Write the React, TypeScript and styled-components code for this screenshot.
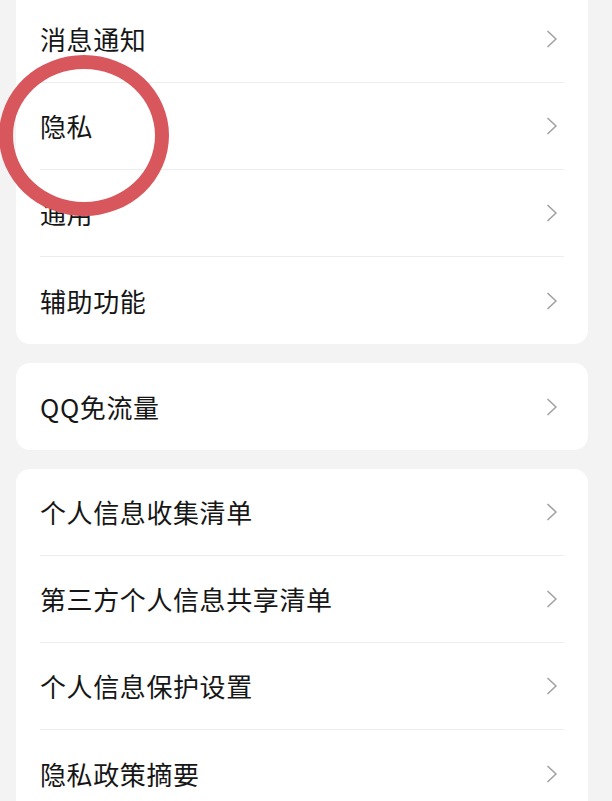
import React from "react";
import styled, { createGlobalStyle } from "styled-components";

const Global = createGlobalStyle`
  html, body { margin: 0; padding: 0; background: #f3f3f3; }
  body { font-family: "Noto Sans CJK SC", "Noto Sans", sans-serif; }
`;

const Page = styled.div`
  position: relative;
  width: 612px;
  height: 801px;
  overflow: hidden;
  background: #f3f3f3;
  padding: 0 24px 0 16px;
  box-sizing: border-box;
  display: flex;
  flex-direction: column;
  gap: 19px;
`;

const Card = styled.div<{ $clipped?: boolean }>`
  background: #ffffff;
  border-radius: ${(p) => (p.$clipped ? "0 0 14px 14px" : "14px")};
  margin-top: ${(p) => (p.$clipped ? "-4px" : "0")};
  display: flex;
  flex-direction: column;
`;

const Row = styled.div<{ $last?: boolean }>`
  height: 87px;
  margin: 0 24px;
  box-sizing: border-box;
  border-bottom: ${(p) => (p.$last ? "none" : "1px solid #ededed")};
  display: flex;
  align-items: center;
  justify-content: space-between;
`;

const Label = styled.span`
  font-size: 26px;
  color: #161616;
  letter-spacing: 0.6px;
  line-height: 1;
`;

const Chevron = styled.svg`
  width: 12px;
  height: 20px;
  margin-right: 6px;
  flex: none;
`;

const Ring = styled.div`
  position: absolute;
  left: -1px;
  top: 55px;
  width: 170px;
  height: 161px;
  box-sizing: border-box;
  border: 14px solid #d8575c;
  border-radius: 50%;
  pointer-events: none;
`;

const Arrow = () => (
  <Chevron viewBox="0 0 12 20">
    <path
      d="M2 2.5 L10 10 L2 17.5"
      fill="none"
      stroke="#a3a3a3"
      strokeWidth="1.7"
      strokeLinecap="round"
      strokeLinejoin="round"
    />
  </Chevron>
);

const groups: string[][] = [
  ["消息通知", "隐私", "通用", "辅助功能"],
  ["QQ免流量"],
  ["个人信息收集清单", "第三方个人信息共享清单", "个人信息保护设置", "隐私政策摘要"],
];

export default function App() {
  return (
    <>
      <Global />
      <Page>
        {groups.map((items, gi) => (
          <Card key={gi} $clipped={gi === 0}>
            {items.map((t, i) => (
              <Row key={t} $last={i === items.length - 1}>
                <Label>{t}</Label>
                <Arrow />
              </Row>
            ))}
          </Card>
        ))}
        <Ring />
      </Page>
    </>
  );
}
